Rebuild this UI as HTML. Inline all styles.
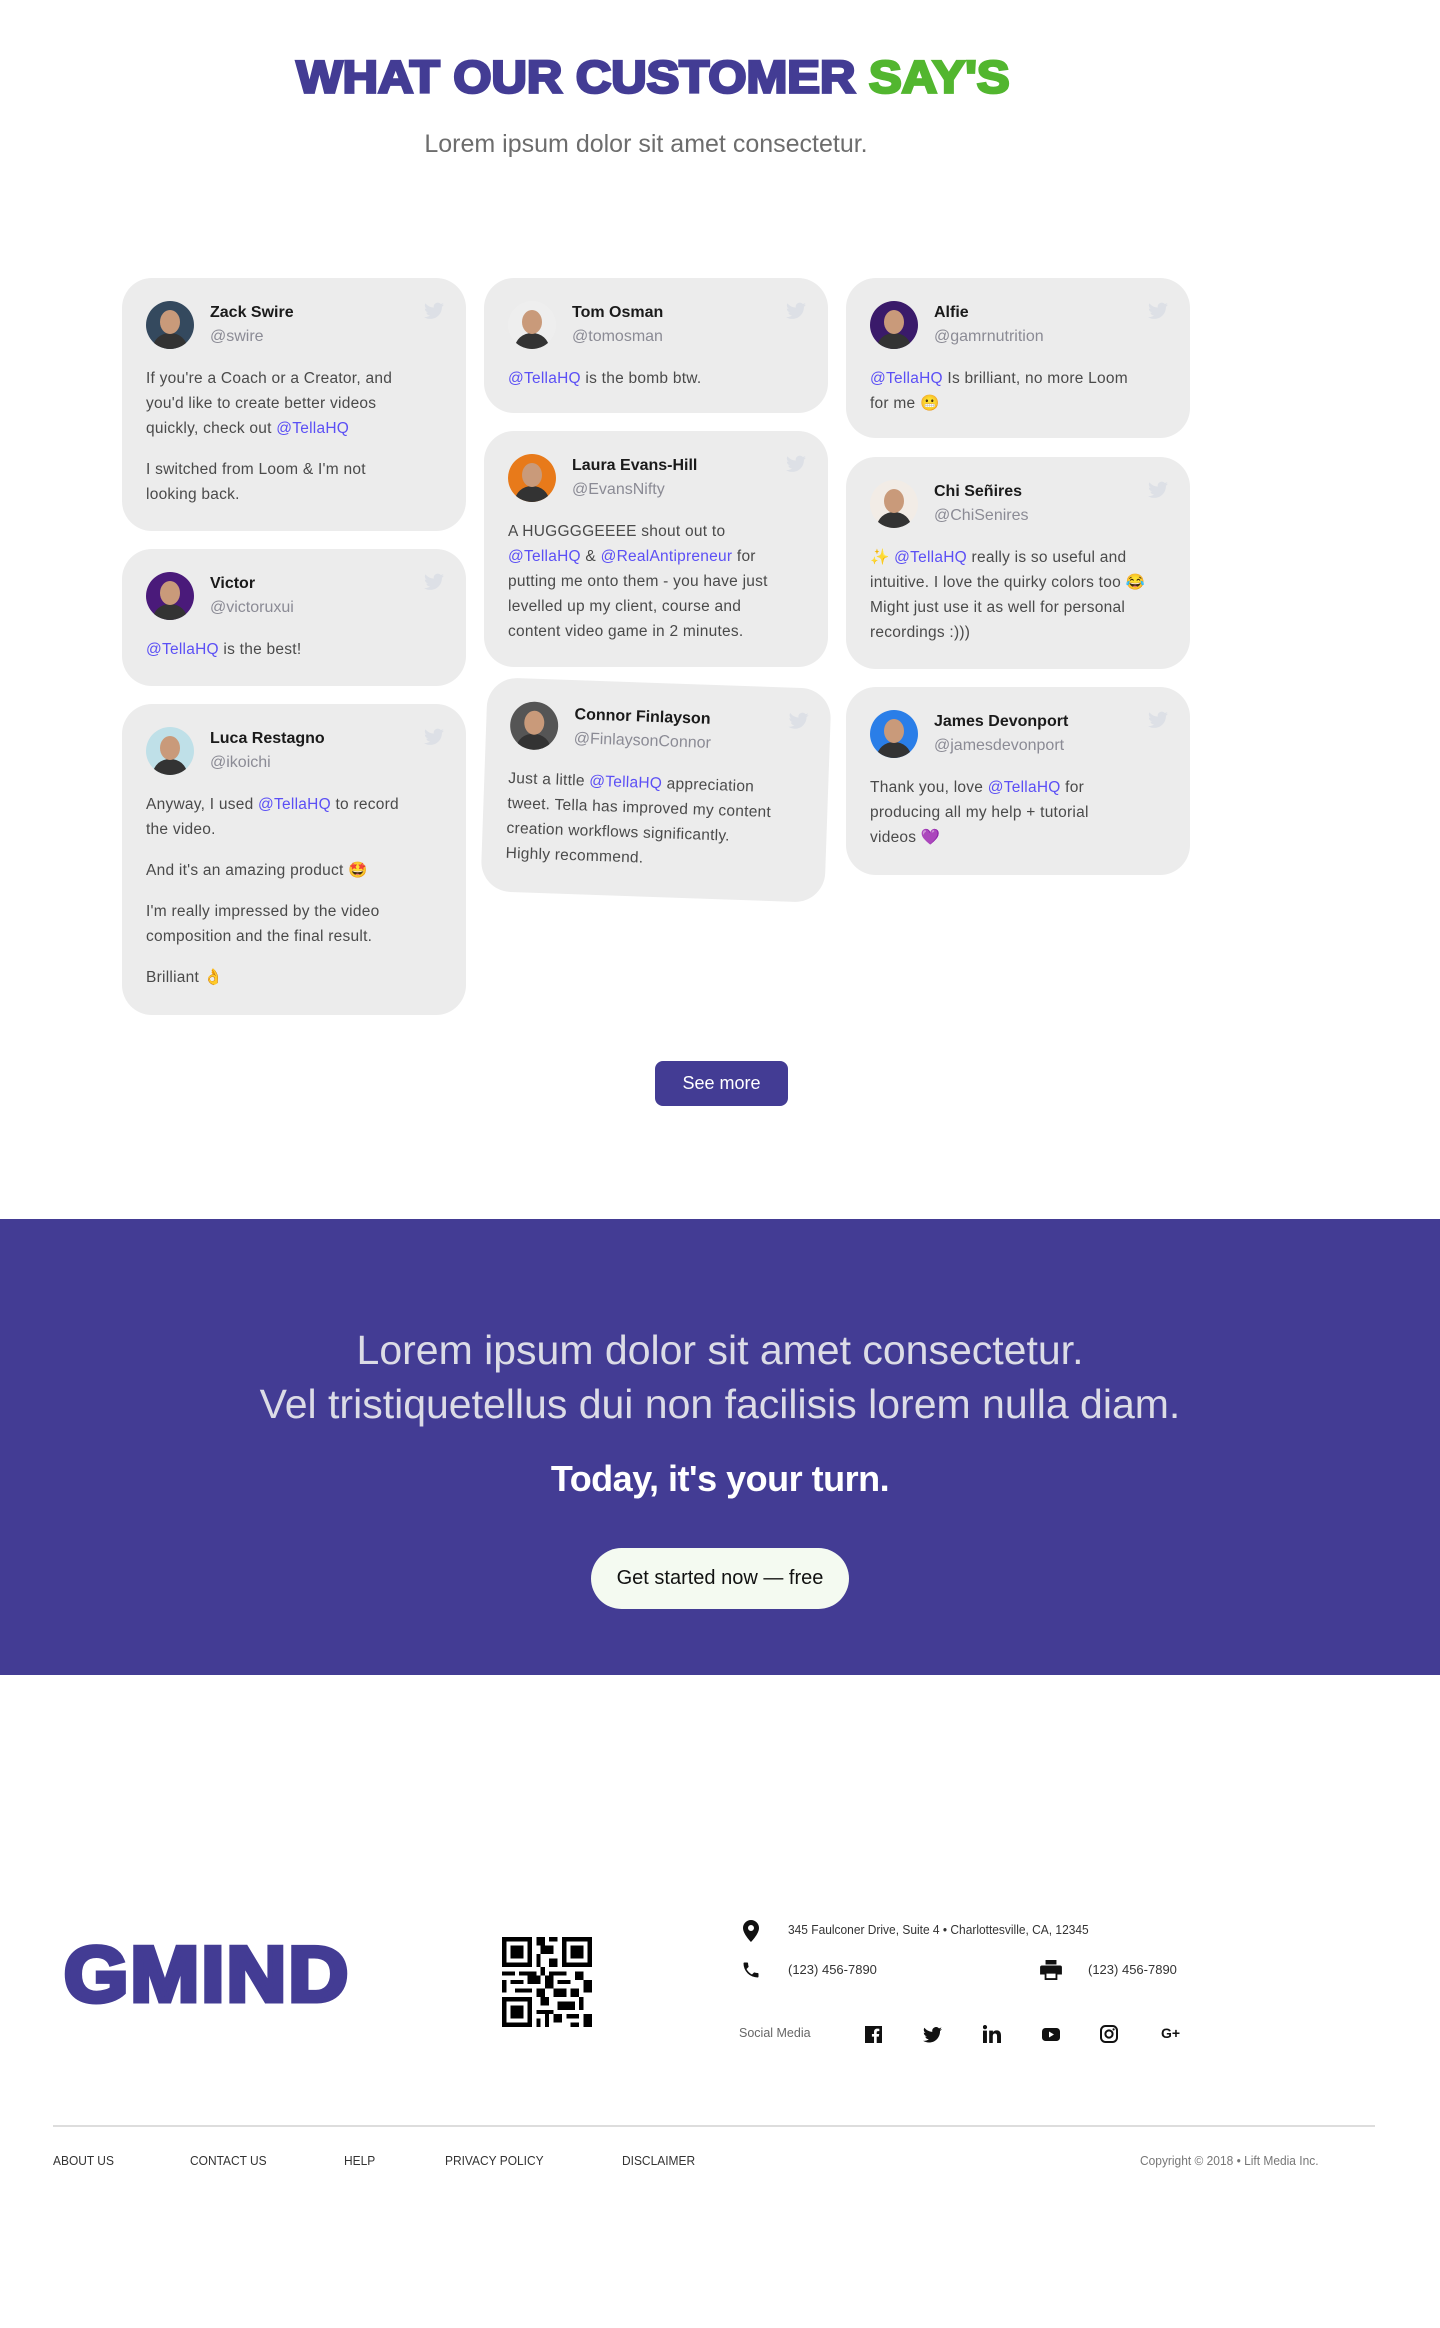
<!DOCTYPE html>
<html><head><meta charset="utf-8">
<style>
*{box-sizing:border-box;margin:0;padding:0}
body{width:1440px;height:2328px;background:#fff;font-family:"Liberation Sans",sans-serif;position:relative;overflow:hidden}
.title{position:absolute;top:50px;left:0;width:1306px;text-align:center;font-size:49px;font-weight:900;letter-spacing:0px;color:#433c94;-webkit-text-stroke:3px currentColor;transform:scaleY(0.92)}
.title span{color:#52b62f}
.sub{position:absolute;top:130px;left:0;width:1292px;text-align:center;font-size:25px;color:#6d6d6d}
.col{position:absolute;top:278px;width:344px;display:flex;flex-direction:column;gap:18px}
.card{background:#ececec;border-radius:30px;padding:23px 24px;position:relative;font-size:15.5px;letter-spacing:.25px;color:#4a4a4a;line-height:25px;white-space:nowrap}
.hd{display:flex;align-items:center;height:48px;margin-bottom:17px;letter-spacing:0}
.av{width:48px;height:48px;border-radius:50%;flex:none;margin-right:16px;position:relative;overflow:hidden}
.av::after{content:"";position:absolute;left:14px;top:9px;width:20px;height:24px;border-radius:50%;background:#c99a7a}
.av::before{content:"";position:absolute;left:7px;top:32px;width:34px;height:30px;border-radius:50%;background:#333}
.nm{font-weight:bold;color:#1a1a1a;font-size:16px;line-height:24px}
.hn{color:#8b8b95;font-size:16px;line-height:24px}
.tw{position:absolute;right:22px;top:24px;width:20px;height:18px}
.card p{margin-bottom:16px}.card p:last-child{margin-bottom:0}
a{color:#5b4ff5;text-decoration:none}
.btn{position:absolute;left:655px;top:1061px;width:133px;height:45px;background:#433c94;border-radius:8px;color:#fff;font-size:18px;text-align:center;line-height:45px}
.band{position:absolute;top:1219px;left:0;width:1440px;height:456px;background:#433c94;text-align:center}
.l1{position:absolute;top:108px;width:100%;font-size:41px;color:#dcdce6}
.l2{position:absolute;top:162px;width:100%;font-size:41px;color:#dcdce6}
.l3{position:absolute;top:239px;width:100%;font-size:36px;font-weight:bold;color:#fff;letter-spacing:-.5px}
.cta{position:absolute;left:591px;top:329px;width:258px;height:61px;border-radius:31px;background:#f4faf1;color:#111;font-size:20px;line-height:61px}
.logo{position:absolute;left:64px;top:1938px;font-size:78px;font-weight:900;color:#433c94;-webkit-text-stroke:5px #433c94;letter-spacing:2px;line-height:72px;transform:scaleX(1.06);transform-origin:left}
.ft{position:absolute;font-size:13px;color:#333}
.fl{position:absolute;top:2153px;font-size:13px;color:#333;transform:scaleX(.92);transform-origin:left}
</style></head><body>
<div class="title">WHAT OUR CUSTOMER <span>SAY'S</span></div>
<div class="sub">Lorem ipsum dolor sit amet consectetur.</div>

<svg width="0" height="0" style="position:absolute"><defs><symbol id="tw" viewBox="0 0 24 20"><path fill="#dde0e6" d="M24 2.4a10 10 0 0 1-2.8.8A5 5 0 0 0 23.3.4a10 10 0 0 1-3.1 1.2A4.9 4.9 0 0 0 11.8 6 14 14 0 0 1 1.7.9a4.9 4.9 0 0 0 1.5 6.6A4.9 4.9 0 0 1 1 6.9a4.9 4.9 0 0 0 3.9 4.9 5 5 0 0 1-2.2.1 4.9 4.9 0 0 0 4.6 3.4A9.9 9.9 0 0 1 0 17.3 14 14 0 0 0 7.5 19.5c9.1 0 14-7.5 14-14v-.6A10 10 0 0 0 24 2.4z"/></symbol></defs></svg>

<div class="col" style="left:122px">
 <div class="card" style="height:253px"><svg class="tw"><use href="#tw"/></svg><div class="hd"><div class="av" style="background:#34495e"></div><div><div class="nm">Zack Swire</div><div class="hn">@swire</div></div></div><p>If you're a Coach or a Creator, and<br>you'd like to create better videos<br>quickly, check out <a>@TellaHQ</a></p><p>I switched from Loom &amp; I'm not<br>looking back.</p></div>
 <div class="card" style="height:137px"><svg class="tw"><use href="#tw"/></svg><div class="hd"><div class="av" style="background:#4a1a7a"></div><div><div class="nm">Victor</div><div class="hn">@victoruxui</div></div></div><p><a>@TellaHQ</a> is the best!</p></div>
 <div class="card" style="height:311px"><svg class="tw"><use href="#tw"/></svg><div class="hd"><div class="av" style="background:#bfe0e8"></div><div><div class="nm">Luca Restagno</div><div class="hn">@ikoichi</div></div></div><p>Anyway, I used <a>@TellaHQ</a> to record<br>the video.</p><p>And it's an amazing product 🤩</p><p>I'm really impressed by the video<br>composition and the final result.</p><p>Brilliant 👌</p></div>
</div>
<div class="col" style="left:484px">
 <div class="card" style="height:135px"><svg class="tw"><use href="#tw"/></svg><div class="hd"><div class="av" style="background:#eee"></div><div><div class="nm">Tom Osman</div><div class="hn">@tomosman</div></div></div><p><a>@TellaHQ</a> is the bomb btw.</p></div>
 <div class="card" style="height:236px"><svg class="tw"><use href="#tw"/></svg><div class="hd"><div class="av" style="background:#e87a1a"></div><div><div class="nm">Laura Evans-Hill</div><div class="hn">@EvansNifty</div></div></div><p>A HUGGGGEEEE shout out to<br><a>@TellaHQ</a> &amp; <a>@RealAntipreneur</a> for<br>putting me onto them - you have just<br>levelled up my client, course and<br>content video game in 2 minutes.</p></div>
 <div class="card" style="height:214px;transform:rotate(2deg);margin-top:-2px"><svg class="tw"><use href="#tw"/></svg><div class="hd"><div class="av" style="background:#555"></div><div><div class="nm">Connor Finlayson</div><div class="hn">@FinlaysonConnor</div></div></div><p>Just a little <a>@TellaHQ</a> appreciation<br>tweet. Tella has improved my content<br>creation workflows significantly.<br>Highly recommend.</p></div>
</div>
<div class="col" style="left:846px">
 <div class="card" style="height:160px"><svg class="tw"><use href="#tw"/></svg><div class="hd"><div class="av" style="background:#3a1a6a"></div><div><div class="nm">Alfie</div><div class="hn">@gamrnutrition</div></div></div><p><a>@TellaHQ</a> Is brilliant, no more Loom<br>for me 😬</p></div>
 <div class="card" style="height:212px;margin-top:1px"><svg class="tw"><use href="#tw"/></svg><div class="hd"><div class="av" style="background:#f2ece6"></div><div><div class="nm">Chi Señires</div><div class="hn">@ChiSenires</div></div></div><p>✨ <a>@TellaHQ</a> really is so useful and<br>intuitive. I love the quirky colors too 😂<br>Might just use it as well for personal<br>recordings :)))</p></div>
 <div class="card" style="height:188px"><svg class="tw"><use href="#tw"/></svg><div class="hd"><div class="av" style="background:#2a7ee8"></div><div><div class="nm">James Devonport</div><div class="hn">@jamesdevonport</div></div></div><p>Thank you, love <a>@TellaHQ</a> for<br>producing all my help + tutorial<br>videos 💜</p></div>
</div>

<div class="btn">See more</div>

<div class="band">
 <div class="l1">Lorem ipsum dolor sit amet consectetur.</div>
 <div class="l2">Vel tristiquetellus dui non facilisis lorem nulla diam.</div>
 <div class="l3">Today, it's your turn.</div>
 <div class="cta">Get started now — free</div>
</div>

<div class="logo">GMIND</div>
<svg style="position:absolute;left:502px;top:1937px" width="90" height="90" viewBox="0 0 21 21" shape-rendering="crispEdges">
<g fill="#000">
<path d="M0 0h7v7H0zM14 0h7v7h-7zM0 14h7v7H0z"/>
</g>
<g fill="#fff"><path d="M1 1h5v5H1zM15 1h5v5h-5zM1 15h5v5H1z"/></g>
<g fill="#000"><path d="M2 2h3v3H2zM16 2h3v3h-3zM2 16h3v3H2z"/>
<path d="M8 0h2v2H8zM11 0h2v1h-2zM9 2h3v2H9zM8 4h1v3H8zM11 5h2v2h-2zM9 7h1v2H9zM0 8h3v1H0zM4 8h4v1H4zM11 8h4v1h-4zM17 8h2v2h-2zM0 10h1v3H0zM2 10h3v1H2zM6 9h3v2H6zM10 9h2v3h-2zM13 10h3v1h-3zM19 10h2v3h-2zM3 12h4v1H3zM8 12h2v2H8zM12 12h3v2h-3zM16 12h2v2h-2zM9 14h2v2H9zM13 15h4v2h-4zM18 14h1v3h-1zM8 17h4v1H8zM10 18h1v3h-1zM12 18h2v2h-2zM15 18h3v1h-3zM19 18h2v3h-2zM8 19h1v2H8zM16 20h2v1h-2z"/></g>
</svg>

<svg style="position:absolute;left:743px;top:1920px" width="16" height="22" viewBox="0 0 16 22"><path d="M8 0a8 8 0 0 0-8 8c0 6 8 14 8 14s8-8 8-14a8 8 0 0 0-8-8zm0 11a3 3 0 1 1 0-6 3 3 0 0 1 0 6z" fill="#111"/></svg>
<div class="ft" style="left:788px;top:1922px;transform:scaleX(.92);transform-origin:left">345 Faulconer Drive, Suite 4 • Charlottesville, CA, 12345</div>
<svg style="position:absolute;left:741px;top:1960px" width="20" height="20" viewBox="0 0 24 24"><path d="M6.6 10.8a15 15 0 0 0 6.6 6.6l2.2-2.2a1 1 0 0 1 1-.25 11 11 0 0 0 3.6.6 1 1 0 0 1 1 1V20a1 1 0 0 1-1 1A17 17 0 0 1 3 4a1 1 0 0 1 1-1h3.5a1 1 0 0 1 1 1 11 11 0 0 0 .6 3.6 1 1 0 0 1-.25 1z" fill="#111"/></svg>
<div class="ft" style="left:788px;top:1962px">(123) 456-7890</div>
<svg style="position:absolute;left:1040px;top:1960px" width="22" height="20" viewBox="0 0 24 22"><path d="M6 0h12v5H6zM2 6h20a2 2 0 0 1 2 2v8h-5v6H5v-6H0V8a2 2 0 0 1 2-2zm5 9v5h10v-5z" fill="#111"/></svg>
<div class="ft" style="left:1088px;top:1962px">(123) 456-7890</div>
<div class="ft" style="left:739px;top:2026px;color:#666;font-size:12.5px">Social Media</div>
<svg style="position:absolute;left:865px;top:2026px" width="17" height="17" viewBox="0 0 16 16"><path d="M0 0h16v16h-5v-6h2l.4-2.5H11V6c0-.7.3-1.2 1.3-1.2h1.2V2.6a15 15 0 0 0-2-.1C9.6 2.5 8.5 3.7 8.5 5.6v1.9h-2V10h2v6H0z" fill="#111"/></svg>
<svg style="position:absolute;left:923px;top:2027px" width="19" height="16" viewBox="0 0 24 20"><path fill="#111" d="M24 2.4a10 10 0 0 1-2.8.8A5 5 0 0 0 23.3.4a10 10 0 0 1-3.1 1.2A4.9 4.9 0 0 0 11.8 6 14 14 0 0 1 1.7.9a4.9 4.9 0 0 0 1.5 6.6A4.9 4.9 0 0 1 1 6.9a4.9 4.9 0 0 0 3.9 4.9 5 5 0 0 1-2.2.1 4.9 4.9 0 0 0 4.6 3.4A9.9 9.9 0 0 1 0 17.3 14 14 0 0 0 7.5 19.5c9.1 0 14-7.5 14-14v-.6A10 10 0 0 0 24 2.4z"/></svg>
<svg style="position:absolute;left:983px;top:2025px" width="18" height="18" viewBox="0 0 16 16"><path d="M0 5h3.5v11H0zM1.75 0a1.9 1.9 0 1 1 0 3.8 1.9 1.9 0 0 1 0-3.8zM5.5 5h3.3v1.5C9.3 5.6 10.4 4.8 12 4.8c3.3 0 4 2.2 4 5V16h-3.5v-5.5c0-1.3 0-3-1.8-3s-2 1.4-2 2.9V16H5.5z" fill="#111"/></svg>
<svg style="position:absolute;left:1042px;top:2028px" width="18" height="13" viewBox="0 0 18 13"><rect width="18" height="13" rx="3.5" fill="#111"/><path d="M7 3.5v6l5-3z" fill="#fff"/></svg>
<svg style="position:absolute;left:1100px;top:2025px" width="18" height="18" viewBox="0 0 18 18"><rect x="1" y="1" width="16" height="16" rx="4.5" fill="none" stroke="#111" stroke-width="2"/><circle cx="9" cy="9" r="3.6" fill="none" stroke="#111" stroke-width="2"/><circle cx="13.6" cy="4.4" r="1.1" fill="#111"/></svg>
<div style="position:absolute;left:1161px;top:2025px;font-size:14px;font-weight:bold;color:#111">G+</div>

<div style="position:absolute;left:53px;top:2125px;width:1322px;height:2px;background:#ddd"></div>
<div class="fl" style="left:53px">ABOUT US</div>
<div class="fl" style="left:190px">CONTACT US</div>
<div class="fl" style="left:344px">HELP</div>
<div class="fl" style="left:445px">PRIVACY POLICY</div>
<div class="fl" style="left:622px">DISCLAIMER</div>
<div class="fl" style="left:1140px;color:#777">Copyright © 2018 • Lift Media Inc.</div>
</body></html>
